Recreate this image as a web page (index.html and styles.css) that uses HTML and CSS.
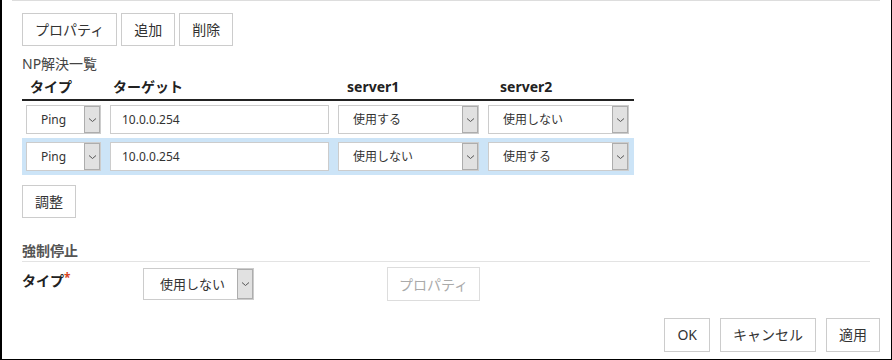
FILE: index.html
```html
<!DOCTYPE html>
<html lang="ja">
<head>
<meta charset="utf-8">
<link rel="stylesheet" href="styles.css">
</head>
<body>
<div class="dlg">
  <div class="topline"></div>
  <div class="toolbar">
    <button class="btn">プロパティ</button>
    <button class="btn">追加</button>
    <button class="btn">削除</button>
  </div>
  <div class="caption">NP解決一覧</div>
  <div class="table">
    <div class="row head">
      <div class="th c1">タイプ</div>
      <div class="th c2">ターゲット</div>
      <div class="th c3">server1</div>
      <div class="th c4">server2</div>
    </div>
    <div class="row">
      <div class="cell"><div class="select"><span class="v">Ping</span><span class="a"><svg width="9" height="6" viewBox="0 0 9 6"><polyline points="1,1.5 4.5,4.5 8,1.5" fill="none" stroke="#555" stroke-width="1"/></svg></span></div></div>
      <div class="cell"><div class="input">10.0.0.254</div></div>
      <div class="cell"><div class="select"><span class="v">使用する</span><span class="a"><svg width="9" height="6" viewBox="0 0 9 6"><polyline points="1,1.5 4.5,4.5 8,1.5" fill="none" stroke="#555" stroke-width="1"/></svg></span></div></div>
      <div class="cell"><div class="select"><span class="v">使用しない</span><span class="a"><svg width="9" height="6" viewBox="0 0 9 6"><polyline points="1,1.5 4.5,4.5 8,1.5" fill="none" stroke="#555" stroke-width="1"/></svg></span></div></div>
    </div>
    <div class="row selected">
      <div class="cell"><div class="select"><span class="v">Ping</span><span class="a"><svg width="9" height="6" viewBox="0 0 9 6"><polyline points="1,1.5 4.5,4.5 8,1.5" fill="none" stroke="#555" stroke-width="1"/></svg></span></div></div>
      <div class="cell"><div class="input">10.0.0.254</div></div>
      <div class="cell"><div class="select"><span class="v">使用しない</span><span class="a"><svg width="9" height="6" viewBox="0 0 9 6"><polyline points="1,1.5 4.5,4.5 8,1.5" fill="none" stroke="#555" stroke-width="1"/></svg></span></div></div>
      <div class="cell"><div class="select"><span class="v">使用する</span><span class="a"><svg width="9" height="6" viewBox="0 0 9 6"><polyline points="1,1.5 4.5,4.5 8,1.5" fill="none" stroke="#555" stroke-width="1"/></svg></span></div></div>
    </div>
  </div>
  <div class="adjust"><button class="btn">調整</button></div>
  <div class="section">強制停止</div>
  <div class="form">
    <div class="label">タイプ<span class="req">*</span></div>
    <div class="select big"><span class="v">使用しない</span><span class="a"><svg width="9" height="6" viewBox="0 0 9 6"><polyline points="1,1.5 4.5,4.5 8,1.5" fill="none" stroke="#555" stroke-width="1"/></svg></span></div>
    <button class="btn disabled">プロパティ</button>
  </div>
  <div class="footer">
    <button class="btn tall">OK</button>
    <button class="btn tall">キャンセル</button>
    <button class="btn tall">適用</button>
  </div>
</div>
</body>
</html>
```
FILE: styles.css
```css
* { box-sizing: border-box; }
body {
  margin: 0;
  font-family: "Noto Sans", "Noto Sans CJK JP", sans-serif;
  color: #333;
  background: #fff;
}
.dlg {
  width: 892px;
  height: 360px;
  border-left: 2px solid #000;
  border-right: 1px solid #000;
  border-bottom: 1px solid #000;
  padding: 0 11px 0 20px;
  overflow: hidden;
}
.topline {
  height: 1px;
  background: #ddd;
  margin-left: -10px;
}
.toolbar {
  display: flex;
  gap: 4px;
  margin-top: 12px;
}
.btn {
  height: 33px;
  padding: 0 12px;
  border: 1px solid #ccc;
  background: #fff;
  font-family: inherit;
  font-size: 14px;
  line-height: 31px;
  color: #333;
  white-space: nowrap;
  margin: 0;
}
.btn.tall { height: 34px; line-height: 32px; }
.caption {
  margin-top: 9px;
  font-size: 14px;
  line-height: 18px;
  color: #444;
}
.table { width: 612px; }
.row {
  display: grid;
  grid-template-columns: 84px 228px 150px 150px;
}
.row.head { border-bottom: 2px solid #222; }
.row.selected { background: #cce4f7; }
.th {
  font-weight: bold;
  font-size: 14px;
  line-height: 20px;
  padding: 4px 0 2px 8px;
  color: #222;
}
.th.c2 { padding-left: 7px; }
.th.c3 { padding-left: 13px; }
.th.c4 { padding-left: 16px; }
.cell { padding: 4px 5px 4px 4px; }
.select {
  display: flex;
  height: 29px;
  border: 1px solid #ccc;
  background: #fff;
  font-size: 12px;
  color: #333;
}
.select .v {
  flex: 1;
  padding-left: 14px;
  line-height: 27px;
  white-space: nowrap;
  overflow: hidden;
}
.select .a {
  width: 16px;
  background: #e1e1e1;
  border: 1px solid #adadad;
  display: flex;
  align-items: center;
  justify-content: center;
}
.input {
  height: 29px;
  border: 1px solid #ccc;
  background: #fff;
  padding-left: 11px;
  font-size: 12px;
  line-height: 27px;
  color: #333;
}
.adjust { margin-top: 10px; }
.section {
  margin-top: 24px;
  margin-right: 10px;
  font-size: 14px;
  font-weight: bold;
  color: #555;
  line-height: 18px;
  padding-bottom: 1px;
  border-bottom: 1px solid #e3e3e3;
}
.form {
  display: flex;
  align-items: flex-start;
  margin-top: 5px;
}
.label {
  width: 121px;
  font-weight: bold;
  font-size: 14px;
  line-height: 20px;
  padding-top: 4px;
  color: #222;
}
.req {
  color: #d9431e;
  font-size: 12px;
  vertical-align: top;
  line-height: 12px;
  position: relative;
  top: 1px;
}
.select.big {
  width: 111px;
  height: 32px;
  margin-top: 1px;
}
.select.big .v { padding-left: 16px; line-height: 30px; font-size: 13px; }
.btn.disabled {
  color: #aaa;
  border-color: #ddd;
  margin-left: 133px;
  padding: 0 11px;
  height: 34px;
}
.footer {
  display: flex;
  justify-content: flex-end;
  gap: 10px;
  margin-top: 17px;
}
```
